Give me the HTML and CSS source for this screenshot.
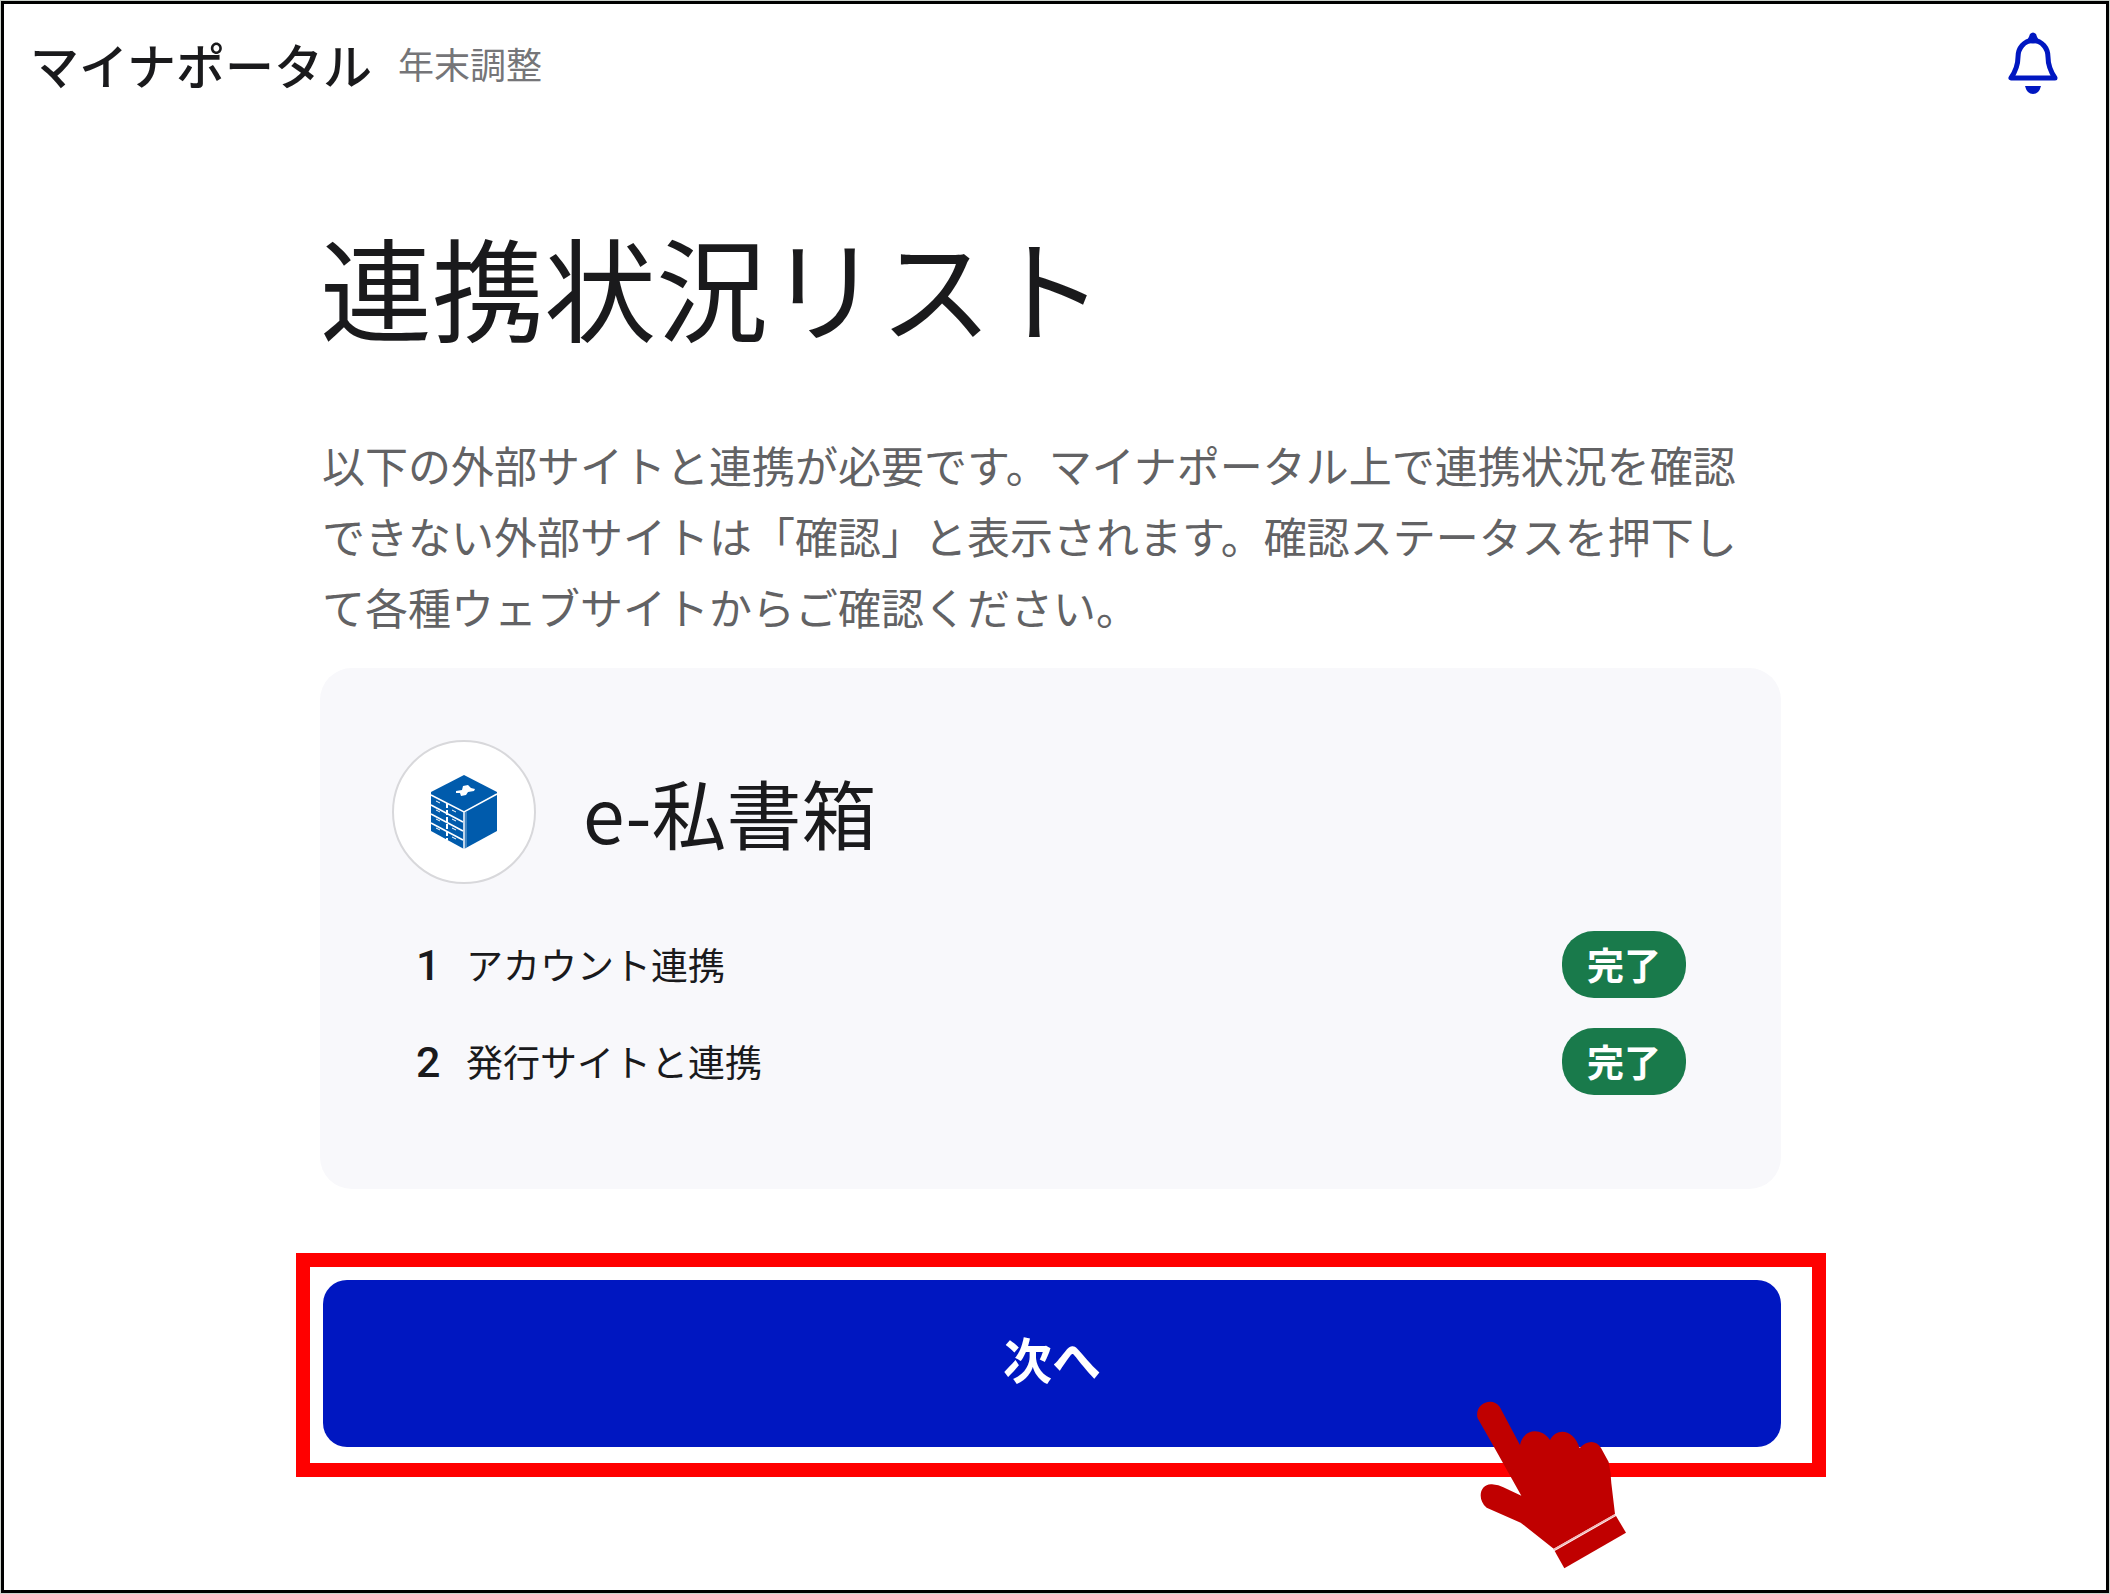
FILE: index.html
```html
<!DOCTYPE html>
<html lang="ja">
<head>
  <meta charset="UTF-8" />
  <meta name="viewport" content="width=device-width, initial-scale=1.0"/>
  <title>マイナポータル 年末調整 - 連携状況リスト</title>
  <link rel="stylesheet" href="styles.css">
</head>
<body>
  <div class="frame">

    <header class="site-header">
      <div class="brand">
        <span class="brand-name">マイナポータル</span>
        <span class="brand-sub">年末調整</span>
      </div>
      <button type="button" class="bell" aria-label="お知らせ">
        <svg width="50" height="62" viewBox="0 0 50 62" fill="none">
          <path d="M25 8C16 9 10 16 10 25C10 34 7 40 3 46H47C43 40 40 34 40 25C40 16 34 9 25 8Z" stroke="#0017c1" stroke-width="5" stroke-linejoin="round"/>
          <path d="M16 10C20 8 21 5 22 2Q25 -1 28 2C29 5 30 8 34 10Q25 13 16 10Z" fill="#0017c1"/>
          <path d="M17 54H33Q31 62 25 62Q19 62 17 54Z" fill="#0017c1"/>
        </svg>
      </button>
    </header>

    <main>
      <h1>連携状況リスト</h1>
      <p class="lead">以下の外部サイトと連携が必要です。マイナポータル上で連携状況を確認できない外部サイトは「確認」と表示されます。確認ステータスを押下して各種ウェブサイトからご確認ください。</p>

      <!-- 連携先 -->
      <section class="card">
        <div class="card-head">
          <span class="card-icon">
            <svg width="68" height="74" viewBox="0 0 68 74">
              <path d="M34 0L67 17V56L34 74L1 56V17Z" fill="#005bac"/>
              <path d="M1 20L34 37L67 19M34 37V74" fill="none" stroke="#fff" stroke-width="1.5"/>
              <path d="M36 37V73" fill="none" stroke="#7fadd5" stroke-width="1"/>
              <path d="M1 30L33 47M1 39L33 56M1 48L33 65" fill="none" stroke="#fff" stroke-width="1.5"/>
              <path d="M17 28V65" fill="none" stroke="#fff" stroke-width="2" stroke-dasharray="5 2"/>
              <path d="M6 26l4 2M6 35l4 2M6 44l4 2M6 53l4 2M22 35l4 2M22 44l4 2M22 53l4 2M22 62l4 2" fill="none" stroke="#fff" stroke-width="1"/>
              <path d="M26 16L32 15L33 11L38 10L41 13L45 14L44 16L38 17L36 20L31 21L30 18L26 18Z" fill="#fff"/>
            </svg>
          </span>
          <h2>e-私書箱</h2>
        </div>
        <ol class="steps">
          <li>
            <span class="step-no">1</span>
            <span class="step-name">アカウント連携</span>
            <span class="badge">完了</span>
          </li>
          <li>
            <span class="step-no">2</span>
            <span class="step-name">発行サイトと連携</span>
            <span class="badge">完了</span>
          </li>
        </ol>
      </section>

      <!-- 次へボタン -->
      <div class="highlight">
        <button type="button" class="next">次へ</button>
        <svg class="pointer" width="153" height="170" viewBox="105 90 459 510">
          <path d="M113 145C101 103 155 78 179 110L240 225C248 180 300 168 330 210C350 172 400 176 419 234C440 210 470 210 483 234L506 276Q513 310 514 340L525 432L341 536L242 458L140 413C108 385 122 340 156 343Q177 345 190 352L244 377L165 236Z" fill="#c00000"/>
          <path d="M344 543L528 438L558 488L373 595Z" fill="#c00000"/>
          <path d="M341 539L526 434" stroke="#f0b8b8" stroke-width="5"/>
        </svg>
      </div>
    </main>

  </div>
</body>
</html>
```
FILE: styles.css
```css
* {
  box-sizing: border-box;
}
body {
  margin: 0;
  padding: 1px;
  background: #ccd2cc;
  color: #1a1a1c;
  font-family: "Noto Sans CJK JP", sans-serif;
}
.frame {
  min-height: calc(100vh - 2px);
  border: 3px solid #000;
  background: #fff;
}
.site-header {
  display: flex;
  align-items: center;
  justify-content: space-between;
  height: 118px;
  padding: 0 48px 0 26px;
}
.brand {
  display: flex;
  align-items: center;
  gap: 26px;
}
.brand-name {
  font-size: 49px;
  font-weight: 500;
}
.brand-sub {
  font-size: 36px;
  color: #757578;
}
.bell {
  padding: 0;
  border: none;
  background: none;
  cursor: pointer;
}
.bell svg {
  display: block;
}
main {
  padding: 83px 325px 112px 316px;
}
h1 {
  margin: 0 0 64px;
  font-size: 112px;
  font-weight: 400;
  line-height: 160px;
}
.lead {
  margin: 0 0 26px;
  padding: 0 20px 0 2px;
  font-size: 43px;
  line-height: 71px;
  color: #626264;
}
.card {
  padding: 72px 95px 94px 72px;
  border-radius: 32px;
  background: #f8f8fb;
}
.card-head {
  display: flex;
  align-items: center;
  gap: 47px;
}
.card-icon {
  display: flex;
  align-items: center;
  justify-content: center;
  width: 144px;
  height: 144px;
  border: 2px solid #d8d8db;
  border-radius: 50%;
  background: #fff;
}
h2 {
  margin: 0;
  font-size: 75px;
  font-weight: 400;
  line-height: 112px;
}
.steps {
  display: flex;
  flex-direction: column;
  gap: 30px;
  margin: 47px 0 0;
  padding: 0 0 0 24px;
  list-style: none;
}
.steps li {
  display: flex;
  align-items: center;
}
.step-no {
  width: 50px;
  font-family: Roboto, sans-serif;
  font-size: 43px;
  font-weight: 500;
}
.step-name {
  flex: 1;
  font-size: 37px;
  font-weight: 400;
  line-height: 67px;
}
.badge {
  padding: 0 25px;
  border-radius: 32px;
  background: #197a4b;
  color: #fff;
  font-size: 37px;
  font-weight: 700;
  line-height: 67px;
}
.highlight {
  position: relative;
  margin: 64px -45px 0 -24px;
  padding: 13px 31px 16px 13px;
  border: 14px solid #f00;
}
.next {
  display: block;
  width: 100%;
  padding: 46px 0 58px;
  border: none;
  border-radius: 24px;
  background: #0017c1;
  color: #fff;
  font-family: inherit;
  font-size: 49px;
  font-weight: 700;
  line-height: 63px;
  cursor: pointer;
}
/* 指カーソル */
.pointer {
  position: absolute;
  top: 133px;
  right: 184px;
}
```
